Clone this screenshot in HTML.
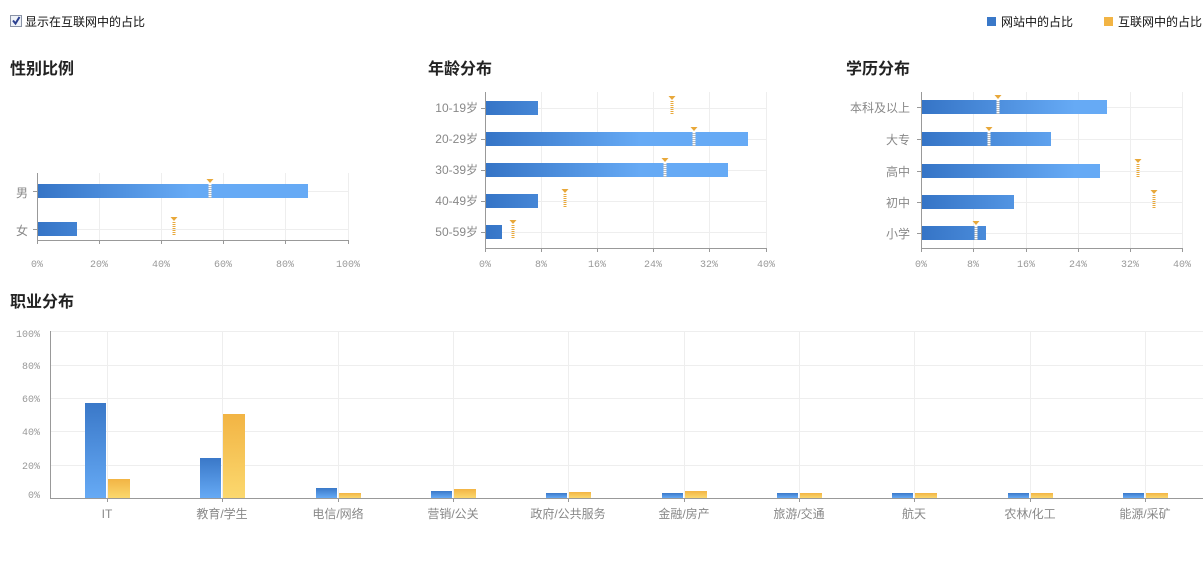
<!DOCTYPE html>
<html><head><meta charset="utf-8">
<style>
html,body{margin:0;padding:0;background:#fff;width:1203px;height:568px;overflow:hidden;}
svg{position:absolute;left:0;top:0;}
.t{font-family:"Liberation Sans","Noto Sans CJK SC",sans-serif;}
.h{font-size:16px;font-weight:bold;fill:#222;}
.ax{font-size:10px;fill:#999;font-family:"Liberation Mono","Noto Sans CJK SC",monospace;}
.cl{font-size:12px;fill:#888;}
</style></head><body>
<svg id="s" width="1203" height="568" class="t">
<defs>
<linearGradient id="gb1" gradientUnits="userSpaceOnUse" x1="37" x2="190" y1="0" y2="0"><stop offset="0" stop-color="#3574c6"/><stop offset="1" stop-color="#66aaf5"/></linearGradient>
<linearGradient id="gb2" gradientUnits="userSpaceOnUse" x1="485" x2="640" y1="0" y2="0"><stop offset="0" stop-color="#3574c6"/><stop offset="1" stop-color="#66aaf5"/></linearGradient>
<linearGradient id="gb3" gradientUnits="userSpaceOnUse" x1="921" x2="1075" y1="0" y2="0"><stop offset="0" stop-color="#3574c6"/><stop offset="1" stop-color="#66aaf5"/></linearGradient>
<linearGradient id="gv" x1="0" x2="0" y1="0" y2="1"><stop offset="0" stop-color="#3a78c8"/><stop offset="1" stop-color="#66aaf5"/></linearGradient>
<linearGradient id="go" x1="0" x2="0" y1="0" y2="1"><stop offset="0" stop-color="#f2b444"/><stop offset="1" stop-color="#fbd86e"/></linearGradient>
</defs>
<rect x="10.5" y="15.5" width="11" height="11" fill="#eef2f8" stroke="#8a93a6"/>
<path d="M13 20.5 L15.5 23.5 L19.5 17" stroke="#2a3f8f" stroke-width="2" fill="none"/>
<text x="25" y="26" font-size="12" fill="#111">显示在互联网中的占比</text>
<rect x="987" y="17" width="9" height="9" fill="#3a78c8"/>
<text x="1001" y="26" font-size="12" fill="#111">网站中的占比</text>
<rect x="1104" y="17" width="9" height="9" fill="#f2b444"/>
<text x="1118" y="26" font-size="12" fill="#111">互联网中的占比</text>
<text x="10" y="74" class="h">性别比例</text>
<text x="428" y="74" class="h">年龄分布</text>
<text x="846" y="74" class="h">学历分布</text>
<text x="10" y="307" class="h">职业分布</text>
<g id="g"></g>
<g class="cl" text-anchor="end">
<text x="28" y="197">男</text><text x="28" y="235">女</text>
<text x="478" y="112">10-19岁</text><text x="478" y="143">20-29岁</text><text x="478" y="174">30-39岁</text><text x="478" y="205">40-49岁</text><text x="478" y="236">50-59岁</text>
<text x="910" y="112">本科及以上</text><text x="910" y="144">大专</text><text x="910" y="176">高中</text><text x="910" y="207">初中</text><text x="910" y="238">小学</text>
</g>
<g class="ax" text-anchor="middle">
<text x="37" y="267">0%</text><text x="99" y="267">20%</text><text x="161" y="267">40%</text><text x="223" y="267">60%</text><text x="285" y="267">80%</text><text x="348" y="267">100%</text>
<text x="485" y="267">0%</text><text x="541" y="267">8%</text><text x="597" y="267">16%</text><text x="653" y="267">24%</text><text x="709" y="267">32%</text><text x="766" y="267">40%</text>
<text x="921" y="267">0%</text><text x="973" y="267">8%</text><text x="1026" y="267">16%</text><text x="1078" y="267">24%</text><text x="1130" y="267">32%</text><text x="1182" y="267">40%</text>
</g>
<g class="ax" text-anchor="end">
<text x="40" y="337">100%</text><text x="40" y="369">80%</text><text x="40" y="402">60%</text><text x="40" y="435">40%</text><text x="40" y="469">20%</text><text x="40" y="498">0%</text>
</g>
<g class="cl" text-anchor="middle">
<text x="107" y="518">IT</text><text x="222" y="518">教育/学生</text><text x="338" y="518">电信/网络</text><text x="453" y="518">营销/公关</text><text x="568" y="518">政府/公共服务</text><text x="684" y="518">金融/房产</text><text x="799" y="518">旅游/交通</text><text x="914" y="518">航天</text><text x="1030" y="518">农林/化工</text><text x="1145" y="518">能源/采矿</text>
</g>
</svg>
<script>
var g=document.getElementById('g'),h='';
function L(x1,y1,x2,y2,c){h+='<line x1="'+x1+'" y1="'+y1+'" x2="'+x2+'" y2="'+y2+'" stroke="'+c+'"/>';}
function R(x,y,w,hh,f){h+='<rect x="'+x+'" y="'+y+'" width="'+w+'" height="'+hh+'" fill="'+f+'"/>';}
function M(x,y,onBar){h+='<path d="M'+(x-3.5)+' '+y+'h7l-3.5 4z" fill="#e8a83a"/>';for(var k=y+5;k<y+19;k+=2)R(x-1.5,k,3,1,onBar?'#fff':'#e8a83a');if(onBar)for(var k=y+6;k<y+19;k+=2)R(x-1.5,k,3,1,'#bbb');}
function hchart(x0,x1,yt,yb,gx,rows,grad){
 gx.forEach(function(x){L(x+.5,yt,x+.5,yb,'#eee');});
 rows.forEach(function(r){L(x0,r[0]+.5,x1,r[0]+.5,'#eee');L(x0-4,r[0]+.5,x0,r[0]+.5,'#999');});
 rows.forEach(function(r){R(x0,r[0]-7,r[1]-x0,14,'url(#'+grad+')');M(r[2],r[0]-12,r[2]<r[1]);});
 L(x0+.5,yt,x0+.5,yb,'#999');L(x0,yb+.5,x1+1,yb+.5,'#999');
 gx.forEach(function(x){L(x+.5,yb,x+.5,yb+4,'#999');});
}
hchart(37,348,173,240,[37,99,161,223,285,348],[[191,308,210],[229,77,174]],'gb1');
hchart(485,766,92,248,[485,541,597,653,709,766],[[108,538,672],[139,748,694],[170,728,665],[201,538,565],[232,502,513]],'gb2');
hchart(921,1182,92,248,[921,973,1026,1078,1130,1182],[[107,1107,998],[139,1051,989],[171,1100,1138],[202,1014,1154],[233,986,976]],'gb3');
var cx=[107,222,338,453,568,684,799,914,1030,1145];
[331,365,398,431,465].forEach(function(y){L(50,y+.5,1203,y+.5,'#eee');});
cx.forEach(function(x){L(x+.5,331,x+.5,498,'#eee');});
var bv=[[403,479],[458,414],[488,493],[491,489],[493,492],[493,491],[493,493],[493,493],[493,493],[493,493]];
cx.forEach(function(x,i){R(x-22,bv[i][0],21,498-bv[i][0],'url(#gv)');R(x+1,bv[i][1],22,498-bv[i][1],'url(#go)');L(x+.5,498,x+.5,502,'#999');});
L(50.5,331,50.5,498,'#999');L(50,498.5,1203,498.5,'#999');
g.innerHTML=h;
</script>
</body></html>
